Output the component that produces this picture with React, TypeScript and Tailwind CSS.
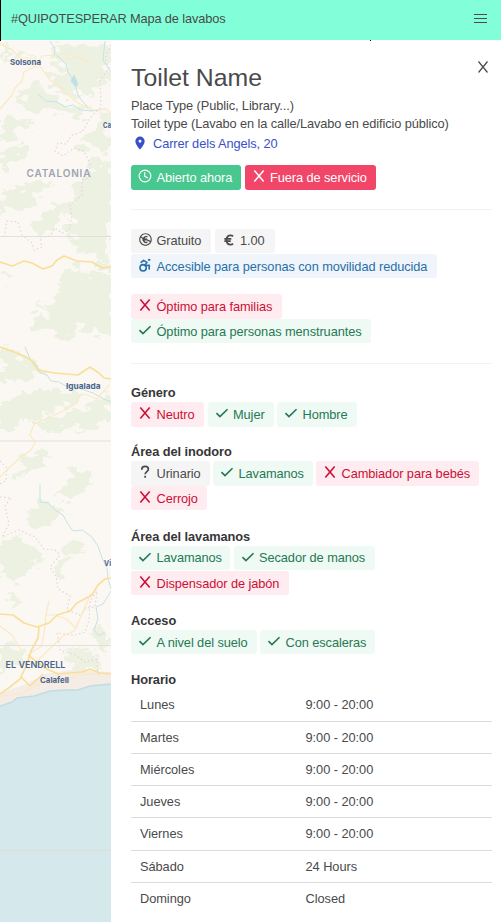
import React from "react";
import { FaCreativeCommonsNcEu } from "react-icons/fa";

type IconName = "clock" | "x" | "check" | "free" | "euro" | "chair" | "question" | "pin";

function Icon({ name }: { name: IconName }) {
  if (name === "free") return <FaCreativeCommonsNcEu className="size-[13px]" />;
  const line = { fill: "none", stroke: "currentColor" };
  return (
    <svg viewBox="0 0 24 24" className="size-[14px] overflow-visible" fill="currentColor">
      {name === "clock" && (
        <g {...line} strokeWidth="2">
          <circle cx="12" cy="12" r="10" />
          <path d="M11.5 5.5v7l5.5 3" />
        </g>
      )}
      {name === "x" && <path d="M4 2.5 20 21.5M20 2.5 4 21.5" {...line} strokeWidth="2.7" />}
      {name === "check" && <path d="m2.5 12.3 6 6L21.5 5.5" {...line} strokeWidth="2.8" />}
      {name === "question" && (
        <>
          <path d="M6.5 8c0-3.500 2.500-5.500 5.800-5.500 3.200 0 5.500 1.800 5.500 4.800 0 4-5.500 4-5.500 8.700" {...line} strokeWidth="3" />
          <path d="M10.700 18.500h3.200v3.200h-3.200z" />
        </>
      )}
      {name === "euro" && (
        <path d="M19 5.500c-1.200-1-2.600-1.500-4.200-1.500-4.500 0-7 3.300-7 8s2.500 8 7 8c1.600 0 3-.5 4.200-1.500M4 10h12M4 14h11" {...line} strokeWidth="3" />
      )}
      {name === "pin" && (
        <path d="M12 11.500A2.500 2.500 0 0 1 9.500 9 2.500 2.500 0 0 1 12 6.500 2.500 2.500 0 0 1 14.500 9 2.500 2.500 0 0 1 12 11.500M12 1a8 8 0 0 0-8 8c0 6 8 14 8 14s8-8 8-14a8 8 0 0 0-8-8Z" />
      )}
      {name === "chair" && (
        <g {...line} strokeWidth="2.700" strokeLinecap="round" strokeLinejoin="round">
          <circle cx="19" cy="3.200" r="1.300" fill="currentColor" strokeWidth="1.500" />
          <path d="M5.500 7.500 9.500 4l6 3.500-4.500 5.500 8.500-.3-.4 6.300" />
          <circle cx="8.800" cy="16.800" r="5.400" />
        </g>
      )}
    </svg>
  );
}

const tones = {
  ok: "bg-[#effaf5] text-[#257953]",
  bad: "bg-[#feecf0] text-[#cc0f35]",
  plain: "bg-[#f5f5f5] text-[#4a4a4a]",
  info: "bg-[#eff5fb] text-[#296fa8]",
  green: "bg-[#48c78e] text-white",
  red: "bg-[#f14668] text-white",
};

type TagProps = { icon: IconName; tone: keyof typeof tones; w: string; children: string };

function Tag({ icon, tone, w, children }: TagProps) {
  return (
    <span className={`flex h-[24.500px] shrink-0 items-center rounded-[3px] pl-[7px] ${tones[tone]} ${w}`}>
      <span className="mb-[2px] mr-[4.500px] flex w-[14px] justify-center"><Icon name={icon} /></span>
      <span className="whitespace-nowrap tracking-[-0.080px]">{children}</span>
    </span>
  );
}

function Row({ children }: { children: React.ReactNode }) {
  return <div className="flex h-[24.800px] gap-[3.500px]">{children}</div>;
}

function Section({ title, h, children }: { title: string; h: string; children: React.ReactNode }) {
  return (
    <section className={h}>
      <h2 className="h-[18px] font-bold leading-[18px] tracking-[-0.060px] text-[#363636]">{title}</h2>
      {children}
    </section>
  );
}

const woods = [
  "M60 41 78 48 91 42 108 48 111 82 99 80 90 96 79 91 69 96 55 88 47 82 54 77 64 78 62 68 50 64 57 58 53 52Z",
  "M0 47 14 54 23 51 31 57 19 60 8 55 0 58Z",
  "M25 88 39 84 48 91 60 98 72 105 86 109 90 116 78 115 66 118 56 112 44 109 35 114 24 109 32 102 17 98Z",
  "M0 122 15 117 26 122 38 119 29 129 17 133 7 143 0 139Z",
  "M111 110 99 118 90 128 80 137 86 145 95 153 111 150Z",
  "M0 153 12 150 20 144 31 147 26 155 14 160 5 170 0 168Z",
  "M0 195 12 189 25 188 38 181 49 183 43 190 33 194 40 200 25 207 10 211 0 219Z",
  "M78 173 90 171 91 161 103 158 111 162V270L99 267 94 256 81 251 74 240 66 231 72 219 67 210 80 201 75 190Z",
  "M38 218 55 207 65 203 76 209 66 218 50 226 39 235 30 225Z",
  "M65 268 78 265 85 273 97 271 111 279V340L101 337 91 327 80 331 70 340 53 336 36 329 31 318 45 315 40 304 52 300 64 292 60 282Z",
  "M0 347 15 352 28 358 35 366 47 369 55 373 42 375 29 382 18 379 9 384 0 381Z",
  "M0 400 15 394 27 396 36 390 48 389 60 387 72 390 80 397 69 407 56 408 47 415 33 421 20 422 13 431 0 429Z",
  "M34 423 49 417 62 417 75 408 87 410 97 399 111 397V423L98 425 88 431 76 427 61 430 50 433 39 429Z",
  "M20 464 32 455 48 448 54 455 44 464 29 473 12 478Z",
  "M60 484 70 471 85 470 90 480 82 494 71 499 60 496Z",
  "M30 509 41 499 51 507 62 506 67 515 54 518 40 526 27 521Z",
  "M0 541 10 535 22 541 35 547 44 556 36 567 23 572 14 581 0 577Z",
  "M54 566 66 558 67 568 62 577 53 574Z",
  "M61 545 73 541 84 545 88 552 74 553 64 556Z",
  "M0 650 9 644 20 645 23 658 12 668 0 677Z",
  "M98 620 111 635V654L98 648 90 634Z",
  "M67 653 78 646 91 654 103 656 99 670 82 670 72 665Z",
  "M10 598 17 594 15 606 10 610Z",
  "M4 268 9 275 8 284 4 278Z",
];

function MapView() {
  return (
    <svg viewBox="0 41 111 881" className="h-[881px] w-[111px] shrink-0" fill="none" fontFamily='Inter, "Noto Sans", sans-serif'>
      <defs>
        <filter id="rough" x="-10%" y="-10%" width="120%" height="120%">
          <feTurbulence type="fractalNoise" baseFrequency="0.070 0.110" numOctaves="3" seed="8" />
          <feDisplacementMap in="SourceGraphic" scale="26" xChannelSelector="R" yChannelSelector="G" />
        </filter>
      </defs>
      <path fill="#fbf8f3" d="M0 40h111v882H0z" />
      <g filter="url(#rough)" fill="#edf1e2">
        {woods.map((d) => <path key={d} d={d} />)}
      </g>
      <path fill="#f4ece5" d="M0 693 26 684 45 674 72 670 111 672V686L72 690 34 695 0 705Z" />
      <path fill="#d5e8eb" d="M0 706 12 702 17 698 34 696 50 691 65 690 78 690 90 686 111 684V922H0Z" />
      <path stroke="#c2dce2" strokeWidth="1.500" d="M0 706 12 702 17 698 34 696 50 691 65 690 78 690 90 686 111 684" />
      <g stroke="#c5e3e8" strokeWidth="1">
        <path d="M50 41 55 49 54 54 60 58 66 64 68 72 72 78 76 88 78 95 82 101 88 107 92 111M38 94 46 101 57 102 65 107 73 105 81 110 92 111 105 109M105 41 103 60 111 72" />
        <path d="m71 81 3-6 4 9-2 3Z" fill="#bee0e7" />
        <path d="m25 347 5 12 7 6 2 7 8 3 4 6 8 1 7 4 8-2 7 5 12 4 11 6 7 3M40 484V502L48 503 55 510 63 515 68 524 73 531 82 530 91 536 98 546 102 558 107 568 108 579 111 589M111 591 103 604 96 607 98 619 94 630 99 636 105 632" />
      </g>
      <g stroke="#e6d3d7" strokeWidth="1.200" strokeDasharray="1.500 2.500">
        <path d="M111 45 105 58 109 68 100 80 101 107 91 117 82 132 72 135 66 144 58 143 55 151 63 156 74 148 84 151 90 164 90 177 82 180 82 195 70 205 72 216 69 230 62 233 55 228 50 236 40 237 42 247 34 250 32 243 22 235 18 222 7 221 4 237" />
        <path d="M0 461 7 468 6 481 0 484M0 497 11 498 5 506 9 524 2 537 19 530 35 537 44 549 55 550 60 555 50 567 56 576 58 589 70 596 67 610 80 615 86 608 95 607 97 591 90 601 89 620 85 632 75 635 57 633 60 650 75 655 85 662 97 659 98 675" />
      </g>
      <g stroke="#fbe9c4" strokeWidth="1.200" strokeLinejoin="round">
        <path d="M0 44 12 50 20 58 35 58 40 66 50 80 60 86 68 95 78 103 93 110 106 109 111 113M0 109 12 95 15 88 22 81 24 72 34 67 42 56 65 54 69 60 77 56 90 64M0 477 11 466 20 458 31 450 35 442 30 435 34 424 50 417 65 410 77 403 80 394 87 395 97 399 109 385" />
        <path d="M49 601 46 614 45 626 42 646 30 653 25 665M45 615 55 615 66 619 76 628 91 593M0 626 12 635 21 650M37 661 63 636 74 631 86 606M0 696 20 694 43 682 65 682 77 675 111 673" />
      </g>
      <g stroke="#fadf9b" strokeWidth="1.700" strokeLinejoin="round">
        <path d="M0 262 12 266 24 261 32 263 43 269 52 266 57 260 64 256 77 261 92 262 102 268 111 267M0 347 14 352 24 356 31 360 38 370 55 373 78 375 90 367 99 373 104 378 111 379" />
        <path d="M0 614 13 615 24 623 37 627 49 623 57 615 70 611 77 603 92 595 98 585 105 579 111 578M39 627 38 638 31 651 28 662 20 679 10 687 0 694M28 655 45 668 58 674 82 672 90 669 100 673 111 674M21 677 30 686 43 674" />
      </g>
      <path stroke="#e2dfdd" d="M0 236.500H111M0 441H111M0 645.500H111" />
      <path stroke="#e7d9d9" d="M0 850.500H111" />
      <g fill="#4a658c" fontSize="8" fontWeight="700" lengthAdjust="spacingAndGlyphs">
        <text x="10" y="65" textLength="31" lengthAdjust="spacingAndGlyphs">Solsona</text>
        <text x="103" y="128" textLength="8" lengthAdjust="spacingAndGlyphs">Ca</text>
        <text x="66" y="389" textLength="34.500" lengthAdjust="spacingAndGlyphs">Igualada</text>
        <text x="104" y="566" textLength="7" lengthAdjust="spacingAndGlyphs">Vi</text>
        <text x="5.500" y="668" textLength="60" fontSize="8.800" fontWeight="600" lengthAdjust="spacingAndGlyphs">EL VENDRELL</text>
        <text x="40" y="683" textLength="29" lengthAdjust="spacingAndGlyphs">Calafell</text>
      </g>
      <text x="26.500" y="177" textLength="64" fill="#9ea3b4" fontSize="10" fontWeight="600">CATALONIA</text>
    </svg>
  );
}

const hours = [
  ["Lunes", "9:00 - 20:00"],
  ["Martes", "9:00 - 20:00"],
  ["Miércoles", "9:00 - 20:00"],
  ["Jueves", "9:00 - 20:00"],
  ["Viernes", "9:00 - 20:00"],
  ["Sábado", "24 Hours"],
  ["Domingo", "Closed"],
];

export default function App() {
  return (
    <div className="h-[922px] w-[501px] overflow-hidden bg-white font-['Liberation_Sans',Arial,sans-serif] text-[12.800px] text-[#4a4a4a]">
      <header className="flex h-10 items-center justify-between border-l border-black bg-[#82ffd8] pb-[3px] pl-[10px] pr-[14px]">
        <span className="tracking-[-0.130px]">#QUIPOTESPERAR Mapa de lavabos</span>
        <span className="flex w-[13px] flex-col gap-[3px]">
          <i className="h-px bg-[#4a4a4a]" /><i className="h-px bg-[#4a4a4a]" /><i className="h-px bg-[#4a4a4a]" />
        </span>
      </header>
      <div className="flex h-px gap-[369px]"><i className="w-px bg-black" /><i className="w-px bg-black" /></div>
      <div className="flex h-[881px]">
        <MapView />
        <main className="w-[390px] pl-5 pr-[9px]">
          <div className="flex h-[55px] items-start justify-between pt-[22px]">
            <h1 className="text-[24.800px] leading-[30px]">Toilet Name</h1>
            <svg viewBox="0 0 10 12" className="mr-1 mt-[-2px] h-3 w-[10px]" fill="none" stroke="#4a4a4a" strokeWidth="1.200"><path d="m.5.5 9 11m0-11-9 11" /></svg>
          </div>
          <p className="h-[18.500px] leading-[19px] tracking-[-0.100px]">Place Type (Public, Library...)</p>
          <p className="h-[19px] whitespace-nowrap leading-[18px] tracking-[-0.100px]">Toilet type (Lavabo en la calle/Lavabo en edificio público)</p>
          <p className="flex h-[31.500px] items-start pl-[2px] leading-[19px] tracking-[-0.100px] text-[#3850c8]">
            <span className="mr-[6px] mt-[2px]"><Icon name="pin" /></span>Carrer dels Angels, 20
          </p>
          <div className="h-[43.500px]">
            <Row><Tag icon="clock" tone="green" w="w-[110px]">Abierto ahora</Tag><Tag icon="x" tone="red" w="w-[131px]">Fuera de servicio</Tag></Row>
          </div>
          <hr className="mb-[18.500px] h-[1.500px] border-0 bg-[#f3f3f3]" />
          <div className="h-[65.600px]">
            <Row><Tag icon="free" tone="plain" w="w-[80px]">Gratuito</Tag><Tag icon="euro" tone="plain" w="w-[60px]">1.00</Tag></Row>
            <div className="pt-[0.600px]"><Row><Tag icon="chair" tone="info" w="w-[306px]">Accesible para personas con movilidad reducida</Tag></Row></div>
          </div>
          <div className="h-[69.400px]">
            <Row><Tag icon="x" tone="bad" w="w-[151px]">Óptimo para familias</Tag></Row>
            <Row><Tag icon="check" tone="ok" w="w-[240px]">Óptimo para personas menstruantes</Tag></Row>
          </div>
          <hr className="mb-[19.200px] h-px border-0 bg-[#f3f3f3]" />
          <Section title="Género" h="h-[59px]">
            <div className="pt-[0.500px]"><Row><Tag icon="x" tone="bad" w="w-[73px]">Neutro</Tag><Tag icon="check" tone="ok" w="w-[66px]">Mujer</Tag><Tag icon="check" tone="ok" w="w-[80px]">Hombre</Tag></Row></div>
          </Section>
          <Section title="Área del inodoro" h="h-[85px]">
            <div className="pt-[0.500px]">
              <Row><Tag icon="question" tone="plain" w="w-[78.500px]">Urinario</Tag><Tag icon="check" tone="ok" w="w-[99.500px]">Lavamanos</Tag><Tag icon="x" tone="bad" w="w-[163px]">Cambiador para bebés</Tag></Row>
              <Row><Tag icon="x" tone="bad" w="w-[76px]">Cerrojo</Tag></Row>
            </div>
          </Section>
          <Section title="Área del lavamanos" h="h-[84px]">
            <Row><Tag icon="check" tone="ok" w="w-[99px]">Lavamanos</Tag><Tag icon="check" tone="ok" w="w-[141.500px]">Secador de manos</Tag></Row>
            <div className="pt-[0.500px]"><Row><Tag icon="x" tone="bad" w="w-[158px]">Dispensador de jabón</Tag></Row></div>
          </Section>
          <Section title="Acceso" h="h-[59.300px]">
            <div className="pt-[0.300px]"><Row><Tag icon="check" tone="ok" w="w-[125.500px]">A nivel del suelo</Tag><Tag icon="check" tone="ok" w="w-[115px]">Con escaleras</Tag></Row></div>
          </Section>
          <Section title="Horario" h="h-[250px]">
            <div className="pt-[0.400px] tracking-[-0.050px]">
              {hours.map(([day, time]) => (
                <div key={day} className="flex h-[32.250px] items-center border-b border-[#dbdbdb] pl-[9px] last:border-0">
                  <span className="w-[165.500px]">{day}</span><span>{time}</span>
                </div>
              ))}
            </div>
          </Section>
        </main>
      </div>
    </div>
  );
}
